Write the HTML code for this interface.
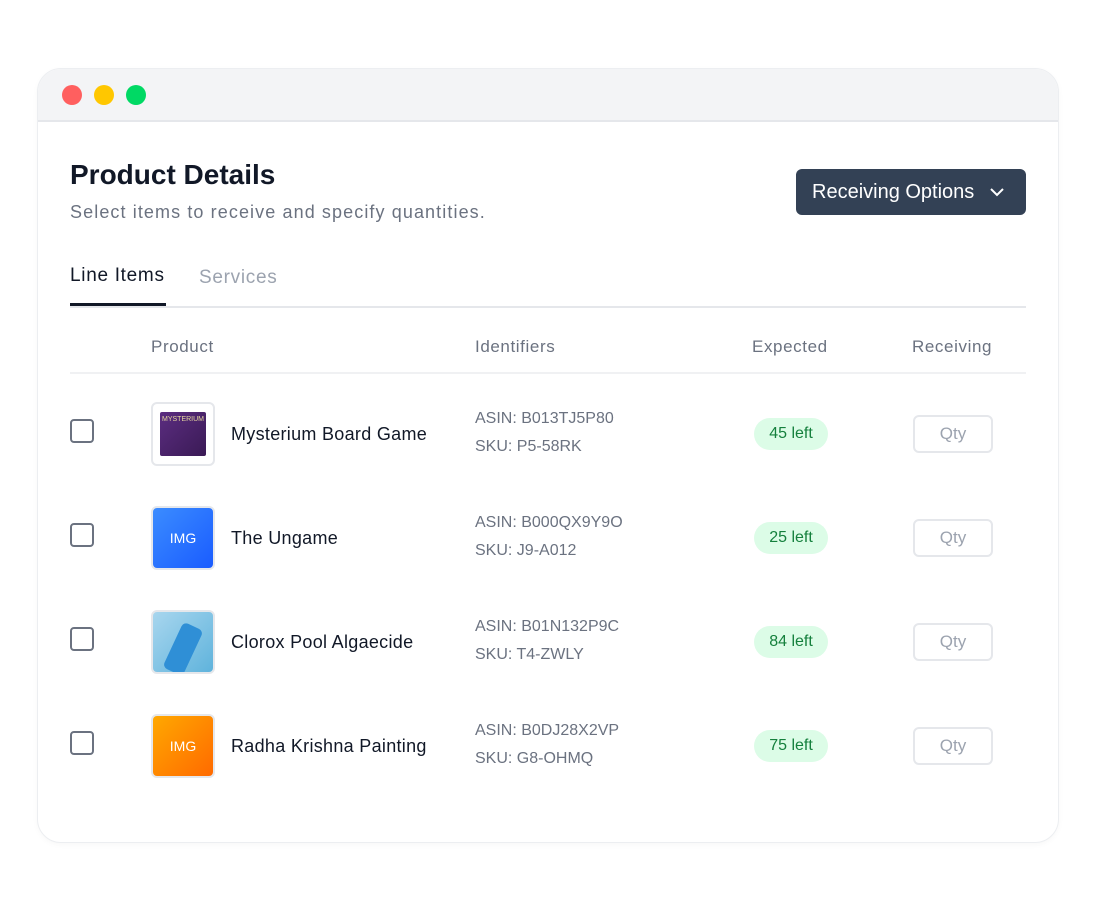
<!DOCTYPE html>
<html><head><meta charset="utf-8"><style>
*{box-sizing:border-box;margin:0;padding:0}
body{width:1100px;height:916px;background:#fff;font-family:"Liberation Sans",sans-serif;position:relative;overflow:hidden}
.win{position:absolute;left:37px;top:68px;width:1022px;height:775px;border-radius:24px;border:1px solid #eceef1;background:#fff;overflow:hidden;box-shadow:0 2px 6px rgba(0,0,0,0.03)}
.in{position:absolute;left:-1px;top:-1px;width:1022px;height:775px}
.bar{position:absolute;left:0;top:0;width:100%;height:54px;background:#f3f4f6;border-bottom:2px solid #e5e7eb}
.dot{position:absolute;top:17px;width:20px;height:20px;border-radius:50%}
.a{position:absolute;white-space:nowrap}
.cb{position:absolute;left:33px;width:24px;height:24px;border:2px solid #6b7280;border-radius:4px}
.img{position:absolute;left:114px;width:64px;height:64px;border:2px solid #e5e7eb;border-radius:6px;overflow:hidden;color:#fff;font-size:14px;display:flex;align-items:center;justify-content:center}
.name{position:absolute;left:194px;font-size:18px;color:#111827;letter-spacing:0.3px}
.id{position:absolute;left:438px;font-size:16px;color:#6b7280;line-height:28px}
.pill{position:absolute;left:717px;width:74px;height:32px;border-radius:16px;background:#dcfce7;color:#15803d;font-size:16px;text-align:center;line-height:32px}
.qty{position:absolute;left:876px;width:80px;height:38px;border:2px solid #e5e7eb;border-radius:6px;color:#9ca3af;font-size:17px;text-align:center;line-height:34px}
.h{font-size:17px;color:#6b7280;letter-spacing:0.6px}
</style></head><body>
<div class="win"><div class="in">
<div class="bar">
<div class="dot" style="left:25px;background:#ff5f5f"></div>
<div class="dot" style="left:57px;background:#ffc700"></div>
<div class="dot" style="left:89px;background:#00d964"></div>
</div>
<div class="a" style="left:33px;top:91px;font-size:28px;font-weight:bold;color:#111827">Product Details</div>
<div class="a" style="left:33px;top:134px;font-size:18px;color:#6b7280;letter-spacing:1.1px">Select items to receive and specify quantities.</div>
<div class="a" style="left:759px;top:101px;width:230px;height:46px;background:#334155;border-radius:6px;color:#fff;font-size:20px;line-height:46px;padding-left:16px">Receiving Options
<svg style="position:absolute;left:193px;top:17px" width="16" height="12" viewBox="0 0 16 12"><path d="M2 3l6 6 6-6" fill="none" stroke="#fff" stroke-width="2"/></svg></div>
<div class="a" style="left:33px;top:197px;font-size:19px;color:#111827;letter-spacing:0.7px">Line Items</div>
<div class="a" style="left:162px;top:199px;font-size:19px;color:#9ca3af;letter-spacing:0.7px">Services</div>
<div class="a" style="left:33px;top:238px;width:956px;height:2px;background:#e5e7eb"></div>
<div class="a" style="left:33px;top:235px;width:96px;height:3px;background:#111827"></div>
<div class="a h" style="left:114px;top:269px">Product</div>
<div class="a h" style="left:438px;top:269px">Identifiers</div>
<div class="a h" style="left:715px;top:269px">Expected</div>
<div class="a h" style="left:875px;top:269px">Receiving</div>
<div class="a" style="left:33px;top:304px;width:956px;height:2px;background:#f0f1f3"></div>

<div class="cb" style="top:351px"></div>
<div class="img" style="top:334px;background:#fff"><div style="width:46px;height:44px;background:linear-gradient(135deg,#5b2d80,#3a1a55);border-radius:2px;font-size:7px;color:#e8d9a0;text-align:center;padding-top:4px">MYSTERIUM</div></div>
<div class="name" style="top:356px">Mysterium Board Game</div>
<div class="id" style="top:337px">ASIN: B013TJ5P80<br>SKU: P5-58RK</div>
<div class="pill" style="top:350px">45 left</div>
<div class="qty" style="top:347px">Qty</div>

<div class="cb" style="top:455px"></div>
<div class="img" style="top:438px;background:linear-gradient(135deg,#3b8cff,#1a5cff)">IMG</div>
<div class="name" style="top:460px">The Ungame</div>
<div class="id" style="top:441px">ASIN: B000QX9Y9O<br>SKU: J9-A012</div>
<div class="pill" style="top:454px">25 left</div>
<div class="qty" style="top:451px">Qty</div>

<div class="cb" style="top:559px"></div>
<div class="img" style="top:542px;background:linear-gradient(135deg,#a8d6ee,#5fb3dc)"><div style="width:22px;height:50px;background:#2f8fd6;border-radius:5px;transform:rotate(25deg);margin-top:14px"></div></div>
<div class="name" style="top:564px">Clorox Pool Algaecide</div>
<div class="id" style="top:545px">ASIN: B01N132P9C<br>SKU: T4-ZWLY</div>
<div class="pill" style="top:558px">84 left</div>
<div class="qty" style="top:555px">Qty</div>

<div class="cb" style="top:663px"></div>
<div class="img" style="top:646px;background:linear-gradient(135deg,#ffa800,#ff6a00)">IMG</div>
<div class="name" style="top:668px">Radha Krishna Painting</div>
<div class="id" style="top:649px">ASIN: B0DJ28X2VP<br>SKU: G8-OHMQ</div>
<div class="pill" style="top:662px">75 left</div>
<div class="qty" style="top:659px">Qty</div>
</div></div>
</body></html>
